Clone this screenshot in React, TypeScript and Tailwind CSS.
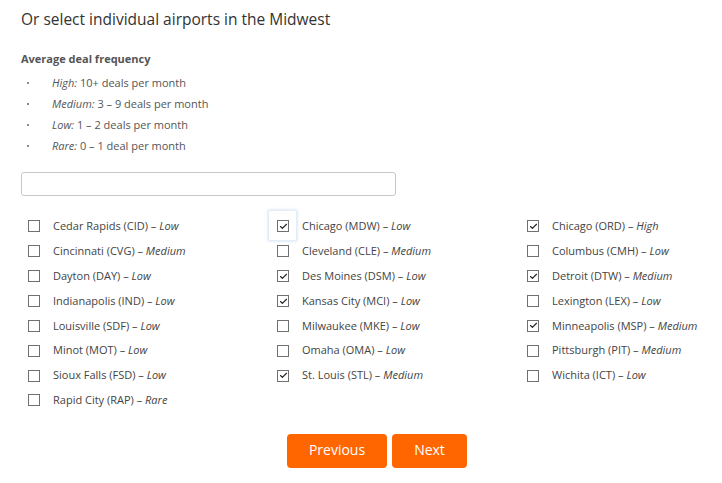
import { Check } from "lucide-react";

type Airport = { name: string; freq: string; checked?: boolean; focused?: boolean };

const FONT = "font-['Open_Sans','DejaVu_Sans',sans-serif]";

const legend = [
  { label: "High:", text: "10+ deals per month" },
  { label: "Medium:", text: "3 \u2013 9 deals per month" },
  { label: "Low:", text: "1 \u2013 2 deals per month" },
  { label: "Rare:", text: "0 \u2013 1 deal per month" },
];

// row-major order, three columns
const airports: Airport[] = [
  { name: "Cedar Rapids (CID)", freq: "Low" },
  { name: "Chicago (MDW)", freq: "Low", checked: true, focused: true },
  { name: "Chicago (ORD)", freq: "High", checked: true },
  { name: "Cincinnati (CVG)", freq: "Medium" },
  { name: "Cleveland (CLE)", freq: "Medium" },
  { name: "Columbus (CMH)", freq: "Low" },
  { name: "Dayton (DAY)", freq: "Low" },
  { name: "Des Moines (DSM)", freq: "Low", checked: true },
  { name: "Detroit (DTW)", freq: "Medium", checked: true },
  { name: "Indianapolis (IND)", freq: "Low" },
  { name: "Kansas City (MCI)", freq: "Low", checked: true },
  { name: "Lexington (LEX)", freq: "Low" },
  { name: "Louisville (SDF)", freq: "Low" },
  { name: "Milwaukee (MKE)", freq: "Low" },
  { name: "Minneapolis (MSP)", freq: "Medium", checked: true },
  { name: "Minot (MOT)", freq: "Low" },
  { name: "Omaha (OMA)", freq: "Low" },
  { name: "Pittsburgh (PIT)", freq: "Medium" },
  { name: "Sioux Falls (FSD)", freq: "Low" },
  { name: "St. Louis (STL)", freq: "Medium", checked: true },
  { name: "Wichita (ICT)", freq: "Low" },
  { name: "Rapid City (RAP)", freq: "Rare" },
];

function AirportOption({ airport }: { airport: Airport }) {
  return (
    <label className="flex h-[24.86px] items-center pl-[7px] text-[11px] text-[#444]">
      <span className="relative flex size-[12px] shrink-0 items-center justify-center border border-[#707070] bg-white">
        {airport.focused && (
          <span className="absolute -top-[11px] -left-[10px] h-[31px] w-[29px] border border-[#e3edf8] shadow-[0_0_3px_rgba(120,160,220,0.35)]" />
        )}
        {airport.checked && <Check className="relative size-[9px] text-[#222]" strokeWidth={3} />}
      </span>
      <span className="ml-[13px] whitespace-nowrap">
        {airport.name} &ndash; <em>{airport.freq}</em>
      </span>
    </label>
  );
}

export default function App() {
  return (
    <div className={`h-[483px] w-[722px] overflow-hidden bg-white ${FONT}`}>
      <div className="ml-[21px] w-[712px]">
        <h2 className="mt-[9px] text-[15.5px] leading-[20px] font-normal text-[#333]">
          Or select individual airports in the Midwest
        </h2>

        <div className="mt-[22px] text-[11px] leading-[16px] font-bold text-[#555]">Average deal frequency</div>

        <ul className="mt-[5px] text-[11px] leading-[21px] text-[#555]">
          {legend.map((l) => (
            <li key={l.label} className="flex items-center">
              <span className="ml-[6px] size-[2px] bg-[#888]" />
              <span className="ml-[23px]">
                <em>{l.label}</em> {l.text}
              </span>
            </li>
          ))}
        </ul>

        <input
          type="text"
          className="mt-[16px] block h-[24px] w-[375px] rounded-[3px] border border-[#c8c8c8] bg-white"
        />

        <div className="mt-[18px] grid grid-cols-[249px_250px_1fr]">
          {airports.map((a) => (
            <AirportOption key={a.name} airport={a} />
          ))}
        </div>

        <div className="mt-[21px] flex justify-center gap-[5px]">
          <button className="h-[34px] w-[100px] rounded-[4px] bg-[#ff6600] pb-[2px] text-[14px] text-white">Previous</button>
          <button className="h-[34px] w-[75px] rounded-[4px] bg-[#ff6600] pb-[2px] text-[14px] text-white">Next</button>
        </div>
      </div>
    </div>
  );
}
